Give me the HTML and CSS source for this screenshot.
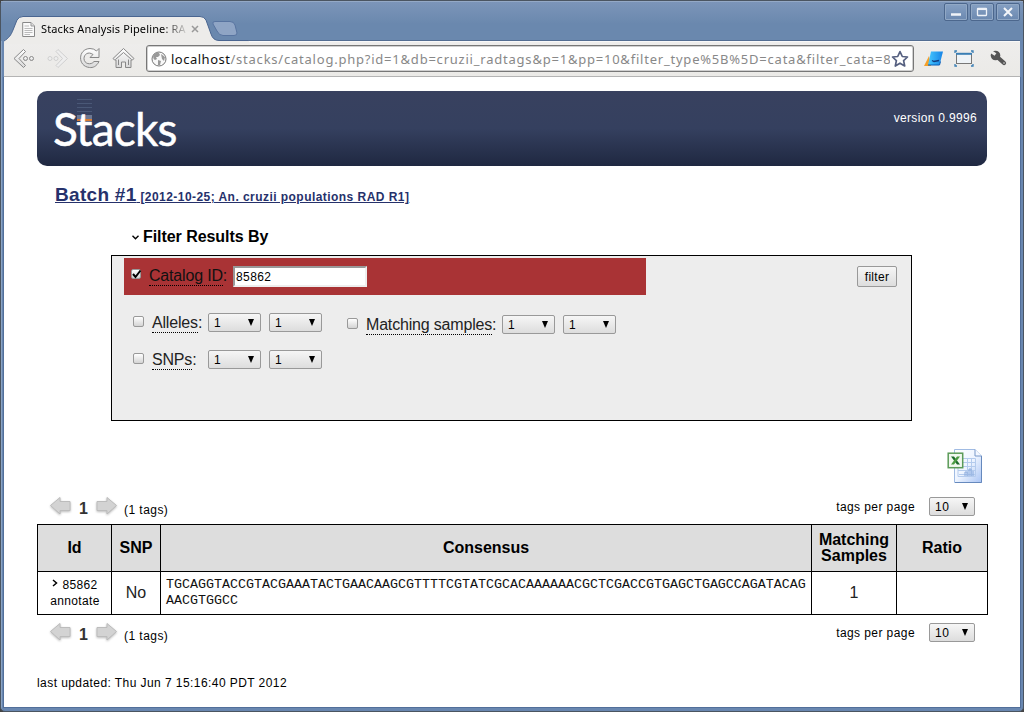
FILE: index.html
```html
<!DOCTYPE html>
<html lang="en">
<head>
<meta charset="utf-8">
<title>Stacks Analysis Pipeline</title>
<link rel="stylesheet" href="styles.css">
</head>
<body>
<svg class="defs" width="0" height="0" aria-hidden="true">
  <defs>
    <linearGradient id="metal" x1="0" y1="0" x2="0" y2="1"><stop offset="0" stop-color="#fff"/><stop offset="1" stop-color="#d8d8d8"/></linearGradient>
    <linearGradient id="sheet" x1="0" y1="0" x2="1" y2="1"><stop offset="0" stop-color="#fff"/><stop offset=".5" stop-color="#edf4ff"/><stop offset="1" stop-color="#a9c4f4"/></linearGradient>
    <linearGradient id="ink" x1="0" y1="0" x2="1" y2="0"><stop offset="0" stop-color="#45c8ff"/><stop offset="1" stop-color="#1683e6"/></linearGradient>
    <symbol id="arrow" viewBox="0 0 24 21"><path d="M1.500 9.500 11 1.500V5.500H21V14.500H11V18Z" fill="#d3d3d3" stroke="#bcbcbc" stroke-linejoin="round"/></symbol>
  </defs>
</svg>
<div class="window">
  <div class="titlebar">
    <svg class="tabshape" width="245" height="28" viewBox="0 0 245 28">
      <path d="M0 28V25C5 22 7 19 9 14L13 4Q15 .5 19 .5H196Q200 .5 202 4L207 18Q209 24.500 215 24.500H245V28Z" fill="#edecea"/>
      <path d="M0 25C5 22 7 19 9 14L13 4Q15 .5 19 .5H196Q200 .5 202 4L207 18Q209 24.500 215 24.500H245" fill="none" stroke="#4a6590"/>
      <path d="M211 5.500H226Q230 5.500 231 9L233 17Q233 19.500 230 19.500H219Q215 19.500 213 15L209 8Q208 5.500 211 5.500Z" fill="#8fa5c5" stroke="#5874a0"/>
    </svg>
    <div class="tab">
      <svg width="14" height="17" viewBox="0 0 14 17"><path d="M.7 1.500H9L12.500 5V15.500H.7Z" fill="#fafafa" stroke="#888"/><path d="M9 1.500V5H12.500" fill="#ddd" stroke="#999"/><path d="M2.500 5H7M2.500 7.500H10.500M2.500 9.500H10.500M2.500 11.500H10.500M2.500 13.500H8" stroke="#bbb"/></svg>
      <span class="tabtitle">Stacks Analysis Pipeline: RA</span>
      <svg width="8" height="8" viewBox="0 0 8 8"><path d="M1 1 7 7M7 1 1 7" stroke="#999" stroke-width="1.500"/></svg>
    </div>
    <div class="controls">
      <span><svg width="22" height="16" viewBox="0 0 22 16"><path d="M6 10.500H16" stroke="#f0f3f8" stroke-width="2.500"/></svg></span>
      <span><svg width="22" height="16" viewBox="0 0 22 16"><rect x="6.500" y="4.500" width="9" height="7" rx=".5" fill="none" stroke="#eef2f8" stroke-width="1.300"/><path d="M6 5.300H16" stroke="#eef2f8" stroke-width="1.500"/></svg></span>
      <span><svg width="22" height="16" viewBox="0 0 22 16"><path d="M7 4 15 12M15 4 7 12" stroke="#f4f6fa" stroke-width="2"/></svg></span>
    </div>
  </div>
  <div class="toolbar">
    <svg class="nav" width="132" height="26" viewBox="0 0 132 26">
      <g fill="url(#metal)" stroke="#888" stroke-linejoin="round">
        <path d="M11.500 2.500 2 11.500 11.500 20.500 13.500 18.500 7 11.500 13.500 4.500Z"/><circle cx="13.500" cy="11.500" r="2"/><circle cx="19.500" cy="11.500" r="2"/>
      </g>
      <g fill="#eee" stroke="#d0d0d0" stroke-linejoin="round">
        <path d="M46 2.500 55.500 11.500 46 20.500 44 18.500 50.500 11.500 44 4.500Z"/><circle cx="38" cy="11.500" r="2"/><circle cx="44" cy="11.500" r="2"/>
      </g>
      <g fill="url(#metal)" stroke="#888" stroke-linejoin="round">
        <path d="M84.500 4 87 1.500V10.500H78L81 7.500C76 4 72 7.500 72 11.500C72 17 79 18.500 82 14.500H87C84.500 19.500 81 21 77.500 20.500C65.500 19.500 65.500 2 78 1.500Q82 1.500 84.500 4Z"/>
        <path d="M101 11.500 111.500 1.500 122 11.500 120.500 13H119V20.500H113.500V15H109.500V20.500H104V13H102.500Z"/><path d="M103.500 12.500 111.500 5.500 119.500 12.500" fill="none"/><path d="M106.500 18V12.500M116.500 18V12.500" fill="none"/>
      </g>
    </svg>
    <div class="address">
      <svg width="16" height="16" viewBox="0 0 16 16"><circle cx="8" cy="8" r="7" fill="#f8f8f8" stroke="#777"/><path d="M2 5Q4 1 8 2L9 4 7 6 5 6 6 8 4 9Q2 8 2 5ZM7 9 10 10 9 14 7 14ZM10 3 14 6 13 10 11 8Z" fill="#999"/></svg>
      <span class="url"><b>localhost</b>/stacks/catalog.php?id=1&amp;db=cruzii_radtags&amp;p=1&amp;pp=10&amp;filter_type%5B%5D=cata&amp;filter_cata=8</span>
      <svg class="star" width="18" height="18" viewBox="0 0 18 18"><path d="M9 1.600 11.300 6.500 16.500 7 12.600 10.600 13.700 16 9 13.200 4.300 16 5.400 10.600 1.500 7 6.700 6.500Z" fill="#fff" stroke="#566080" stroke-width="1.700" stroke-linejoin="round"/></svg>
    </div>
    <svg class="extensions" width="86" height="22" viewBox="0 0 86 22">
      <path d="M0 18 5 8 7 18Z" fill="#f5a02a"/><path d="M7 3.500H19L15.500 17H4Z" fill="url(#ink)"/><path d="M4 17H15.500L16.500 13.500" fill="none" stroke="#075bb6"/><path d="M8 12.500 10 13.500 15 12.500" fill="none" stroke="#123c80" stroke-width="1.300"/>
      <g fill="none" stroke="#397eb4" stroke-width="1.300"><path d="M31 5V3H33M47 3H49V5M31 16V18H33M47 18H49V16"/><rect x="32.500" y="5.500" width="15" height="10" fill="#eef3f7" stroke="#777" stroke-width="1"/><path d="M32 5.800H48" stroke-width="2"/></g>
      <path d="M71 7 80 15" stroke="#555" stroke-width="4.200" stroke-linecap="round"/><circle cx="71.500" cy="7.500" r="4.800" fill="#555"/><path d="M66 3 71.500 6.500" stroke="#edecea" stroke-width="3.200"/><circle cx="80" cy="15" r=".8" fill="#ddd"/>
    </svg>
  </div>
  <main class="page">
    <header class="banner">
      <div class="logo"><i class="bars"></i><span>Stacks</span></div>
      <span class="version">version 0.9996</span>
    </header>
    <h1><span class="batch">Batch #1</span><span class="batchinfo">&nbsp;[2012-10-25; An. cruzii populations RAD R1]</span></h1>
    <h2><svg width="7" height="5" viewBox="0 0 7 5"><path d="M.5 .8 3.500 3.800 6.500 .8" fill="none" stroke="#000" stroke-width="1.400"/></svg><span>Filter Results By</span></h2>
    <section class="filters">
      <div class="catalog">
        <i class="check"><svg width="11" height="11" viewBox="0 0 11 11"><path d="M2 5 4.500 8 9.500 1.500" fill="none" stroke="#000" stroke-width="2"/></svg></i>
        <span class="label cat"><u>Catalog ID</u>:</span><span class="input">85862</span>
      </div>
      <div class="button">filter</div>
      <div class="criteria">
        <div class="criterion"><i class="check"></i><span class="label al"><u>Alleles</u>:</span><span class="select">1</span><span class="select">1</span></div>
        <div class="criterion match"><i class="check"></i><span class="label ms"><u>Matching samples</u>:</span><span class="select">1</span><span class="select">1</span></div>
        <div class="criterion"><i class="check"></i><span class="label sn"><u>SNPs</u>:</span><span class="select">1</span><span class="select">1</span></div>
      </div>
    </section>
    <div class="export"><svg width="36" height="36" viewBox="0 0 36 36"><path d="M7.500 1.500H28L34.500 8V34.500H7.500Z" fill="url(#sheet)" stroke="#a0bbe3"/><path d="M34.500 8V34.500H8" fill="none" stroke="#6689bd"/><path d="M28 1.500V8H34.500" fill="#f4f8ff" stroke="#7898c8"/><path d="M16 10.500H28.500V28.500H11V20M16 14.500H28M15 18.500H28M11 22.500H28M20.500 10V28M24.500 10V28M12 26.500H28" fill="none" stroke="#b4cbed"/><path d="M18 28V24H20V28M22 28V21H24V28M26 28V23" fill="none" stroke="#86a8dc"/><rect x="1.200" y="5.200" width="14.500" height="14.500" fill="#f1f8ef" stroke="#5b9b58" stroke-width="1.500"/><path d="M4 8.500H7L13 16.500H10Z" fill="#1c6a2b"/><path d="M10 8.500H13L7 16.500H4Z" fill="#4b9b43"/></svg></div>
    <div class="pager">
      <svg width="24" height="21"><use href="#arrow"/></svg><b>1</b><svg class="flip" width="24" height="21"><use href="#arrow"/></svg><span class="count">(1 tags)</span>
      <span class="perpage">tags per page</span><span class="select wide">10</span>
    </div>
    <table>
      <colgroup><col class="c1"><col class="c2"><col class="c3"><col class="c4"><col class="c5"></colgroup>
      <tr class="head"><th>Id</th><th>SNP</th><th>Consensus</th><th>Matching<br>Samples</th><th>Ratio</th></tr>
      <tr class="row"><td class="id"><svg width="6" height="8" viewBox="0 0 6 8"><path d="M1 1 4.500 4 1 7" fill="none" stroke="#000" stroke-width="1.500"/></svg>85862<br>annotate</td><td>No</td><td class="seq">TGCAGGTACCGTACGAAATACTGAACAAGCGTTTTCGTATCGCACAAAAAACGCTCGACCGTGAGCTGAGCCAGATACAG<br>AACGTGGCC</td><td>1</td><td></td></tr>
    </table>
    <div class="pager lower">
      <svg width="24" height="21"><use href="#arrow"/></svg><b>1</b><svg class="flip" width="24" height="21"><use href="#arrow"/></svg><span class="count">(1 tags)</span>
      <span class="perpage">tags per page</span><span class="select wide">10</span>
    </div>
    <footer>last updated: Thu Jun 7 15:16:40 PDT 2012</footer>
  </main>
</div>
</body>
</html>
```
FILE: styles.css
```css
* { box-sizing: border-box; }
html, body { margin: 0; width: 1024px; height: 712px; overflow: hidden; background: #444; }
body { font-family: "Liberation Sans", Arial, sans-serif; color: #000; }
svg { display: block; flex: none; }
.defs { position: absolute; }
.window { width: 1024px; height: 712px; padding: 0 3px 3px; background: #6987b0; border: 1px solid #4b5561; border-radius: 5px; box-shadow: inset 1px 1px #8ba4c4; }
.titlebar { height: 40px; margin: 0 -3px; padding: 0 3px; background: linear-gradient(#7c95b9, #6a88ae 22px); border-top: 1px solid #94a9c6; display: flex; position: relative; }
.tabshape { position: absolute; left: 3px; top: 14px; }
.tab { position: relative; display: flex; align-items: center; margin: 18px 0 0 18px; height: 18px; width: 178px; }
.tabtitle { font: 11px/18px "Noto Sans", sans-serif; letter-spacing: .13px; width: 148px; margin: 0 2px 0 5px; white-space: nowrap; -webkit-mask-image: linear-gradient(90deg, #000 122px, transparent 148px); }
.controls { display: flex; gap: 2px; margin: 1px 0 0 auto; }
.controls span { width: 24px; height: 18px; border: 1px solid #4c678d; border-radius: 2px; background: linear-gradient(#86a0c3, #6b88b0); box-shadow: inset 0 0 0 1px #91a8c5; }
.toolbar { height: 36px; background: linear-gradient(#eeedec, #ebeae7); border-bottom: 1px solid #b4b4b4; border-top: 1px solid #f8f8f8; display: flex; padding-left: 8px; }
.titlebar::after { content: ""; position: absolute; left: 247px; right: 3px; bottom: 0; height: 1px; background: #536d92; }
.nav { margin: 5px 0 0 0; position: relative; }
.address { margin: 3px 0 0 2px; width: 768px; height: 27px; border: 1px solid #777; border-radius: 3px; background: #fff; box-shadow: inset 0 0 0 1px #d0d0d0; display: flex; align-items: center; padding-left: 4px; }
.url { font: 13px/22px "Noto Sans", sans-serif; color: #888; letter-spacing: .78px; white-space: nowrap; width: 719px; margin-left: 4px; overflow: hidden; }
.url b { font-weight: 400; color: #111; letter-spacing: .5px; }
.star { margin-left: 1px; position: relative; }
.extensions { margin: 6px 0 0 10px; }
.page { height: 631px; background: #fff; border: 1px solid #526f9a; border-top: 0; margin: 0 -1px; padding: 14px 33px 0; display: flex; flex-direction: column; }
.banner { flex: none; width: 950px; height: 75px; border-radius: 10px; background: linear-gradient(#38415f, #35405f 50%, #1f2841); color: #fff; display: flex; justify-content: space-between; padding: 0 10px 0 16px; }
.logo { font: 46px/75px Lato, sans-serif; letter-spacing: -.8px; position: relative; -webkit-text-stroke: .5px #fff; }
.logo span { position: relative; }
.bars { position: absolute; left: 24px; top: 8px; width: 15px; height: 22px; background: linear-gradient(transparent 16px, #6d7893 16px 20px, #d77b35 20px), repeating-linear-gradient(#4a5877 0 1px, transparent 1px 4px); }
.version { font-size: 12px; line-height: 14px; letter-spacing: .33px; margin-top: 20px; }
h1 { margin: 13px 0 0 18px; height: 24px; line-height: 22px; color: #26316b; font-weight: 700; white-space: nowrap; }
h1 span { text-decoration: underline; }
.batch { font-size: 19px; letter-spacing: .3px; }
.batchinfo { font-size: 12px; letter-spacing: .45px; }
h2 { margin: 24px 0 0 95px; height: 20px; font-size: 16px; line-height: 20px; letter-spacing: -.06px; display: flex; align-items: center; gap: 4px; }
.filters { flex: none; margin: 8px 0 0 74px; width: 801px; height: 166px; border: 1px solid #000; background: #ededed; display: grid; grid-template: 52px 1fr / 522px 1fr; padding: 2px 14px 0 12px; }
.catalog { width: 522px; height: 37px; background: #a93335; display: flex; padding: 11px 0 0 7px; align-items: flex-start; }
.check { width: 11px; height: 11px; border: 1px solid #999; border-radius: 2px; background: linear-gradient(#fff, #d4d4d4); flex: none; display: block; }
.check svg { margin: -1px; }
.catalog .check { width: 10px; height: 10px; }
.label { font-size: 16px; line-height: 18px; letter-spacing: -.18px; white-space: nowrap; color: #222; padding-top: 1px; }
.label u { text-decoration: none; border-bottom: 1px dotted #000; display: inline-block; height: 19px; }
.catalog .label { color: #111; margin: -3px 0 0 8px; width: 84px; }
.input { margin-top: -3px; width: 134px; height: 21px; background: #fff; border: 2px solid; border-color: #999 #eee #eee #999; font-size: 12px; line-height: 18px; letter-spacing: .4px; padding-left: 1px; }
.button { justify-self: end; margin-top: 8px; width: 40px; height: 21px; border: 1px solid #999; border-radius: 2px; background: linear-gradient(#f6f6f6, #ddd); text-align: center; font-size: 12px; line-height: 20px; letter-spacing: .3px; }
.criteria { grid-column: 1 / 3; display: grid; grid-template: 37px 37px / 214px 1fr; padding: 3px 0 0 9px; }
.criterion { display: flex; align-items: flex-start; }
.criterion .check { margin-top: 3px; }
.match { padding-top: 2px; }
.criterion .label { margin: 0 0 0 8px; }
.al, .sn { width: 56px; }
.ms { width: 136px; }
.select { position: relative; width: 53px; height: 19px; border: 1px solid #999; border-radius: 2px; background: linear-gradient(#f6f6f6, #ddd); font-size: 12px; line-height: 18px; letter-spacing: .5px; padding-left: 5px; flex: none; }
.select + .select { margin-left: 8px; }
.select::after { content: ""; position: absolute; right: 6px; top: 5px; border: solid transparent; border-width: 7px 3.5px 0; border-top-color: #000; }
.export { margin: 27px 4px 0 auto; height: 36px; flex: none; }
.pager { height: 40px; display: flex; align-items: flex-start; padding: 12px 12px 0 12px; flex: none; }
.pager svg { filter: drop-shadow(0 1px 1px #bbb); }
.pager b { font-size: 16px; line-height: 18px; width: 21px; padding-left: 6px; margin-top: 4px; color: #333; }
.pager .flip { transform: scaleX(-1); }
.count { font-size: 12px; line-height: 14px; letter-spacing: .45px; margin: 7px 0 0 6px; }
.perpage { font-size: 12px; line-height: 14px; letter-spacing: .42px; margin: 4px 14px 0 auto; }
.select.wide { width: 46px; margin-top: 1px; }
table { flex: none; width: 951px; height: 91px; table-layout: fixed; border-collapse: collapse; font-size: 16px; }
.c1 { width: 74px; } .c2 { width: 49px; } .c3 { width: 651px; } .c4 { width: 85px; } .c5 { width: 91px; }
th, td { border: 1px solid #000; padding: 0; text-align: center; line-height: 16px; }
th { background: #ddd; }
.head { height: 47px; } .row { height: 43px; }
td { color: #222; }
.id { font-size: 12px; letter-spacing: .35px; color: #000; padding-left: 1px; }
.id svg { display: inline-block; margin-right: 4px; vertical-align: 2px; }
.seq { font: 13.333px/16px "Liberation Mono", monospace; text-align: left; padding-left: 5px; color: #111; white-space: nowrap; vertical-align: top; padding-top: 5px; }
.lower { padding-top: 7px; height: 61px; }
.lower .select { margin-top: 1px; }
footer { font-size: 12px; line-height: 14px; letter-spacing: .43px; white-space: nowrap; }
```
